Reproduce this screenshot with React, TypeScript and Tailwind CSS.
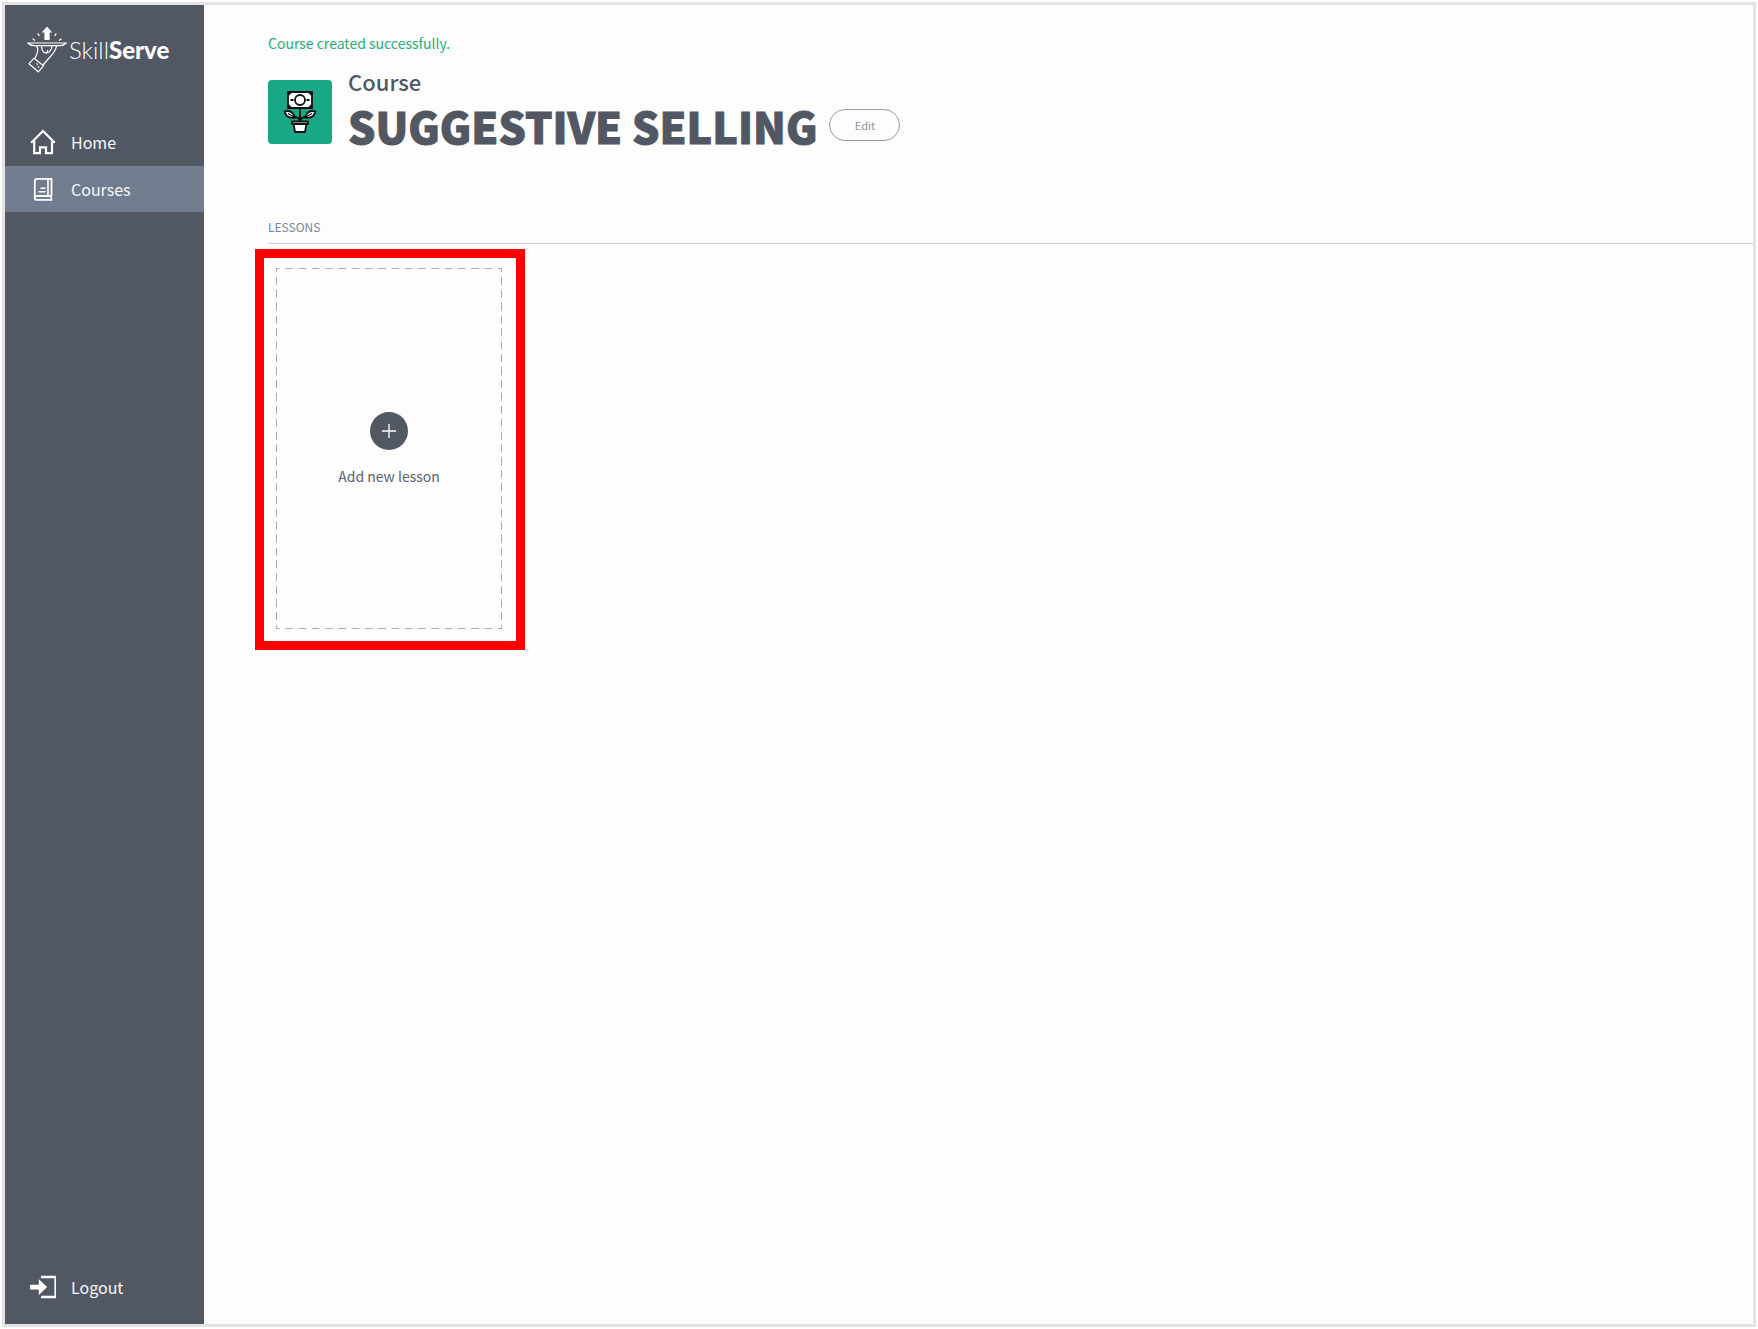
import type { ReactNode } from "react";

interface NavItemProps {
  label: string;
  icon: ReactNode;
  active?: boolean;
}

function NavItem({ label, icon, active = false }: NavItemProps) {
  return (
    <a
      href="#"
      aria-current={active ? "page" : undefined}
      className={
        active
          ? "flex h-[46px] items-center gap-[15px] bg-[#717d8f] pl-[23px] text-base leading-6 text-[#f7f8fa]"
          : "flex h-[46px] items-center gap-[15px] pl-[23px] text-base leading-6 text-[#f7f8fa]"
      }
    >
      {icon}
      {label}
    </a>
  );
}

function HomeIcon() {
  return (
    <svg viewBox="0 0 28 28" className="h-7 w-7" fill="none" stroke="#fff" strokeWidth="2.2">
      <path d="M3.200 14.800 15 3l11.800 11.800M6.200 12.500V25.200h5.800V19.300h6v5.900h6V12.500" />
    </svg>
  );
}

function CoursesIcon() {
  return (
    <svg viewBox="0 0 28 28" className="h-7 w-7" fill="none" stroke="#fff" strokeWidth="1.800">
      <path d="M23.500 21V3.800H9A2.200 2.200 0 0 0 6.800 6v17" />
      <path d="M23.500 21H8.700a1.900 1.900 0 0 0 0 3.800h15.700" />
      <path d="M20 4v17M23.300 21v4" strokeWidth="1.600" />
      <path d="M12.500 13.300h5M10.500 16.800h7" strokeWidth="1.600" />
    </svg>
  );
}

function LogoutIcon() {
  return (
    <svg viewBox="0 0 28 28" className="h-7 w-7" fill="none">
      <path d="M13 4h15M28 24H13" stroke="#fff" strokeWidth="2.400" />
      <path d="M27.200 3v22" stroke="#fff" strokeWidth="1.600" />
      <path d="M2 11.800h8.800V6.200l8.400 7.900-8.400 7.900v-5.400H2z" fill="#fff" />
    </svg>
  );
}

function Logo() {
  return (
    <a href="#" className="flex h-12 items-center" aria-label="SkillServe">
      <svg viewBox="0 0 42 48" className="h-12 w-[42px]" fill="none" stroke="#fff" strokeWidth="1.200">
        <path d="M20 0.500 25.300 6.500H22.600V14h-5.200V6.500H14.700z" fill="#fff" stroke="none" />
        <path d="m5.500 12.800 2.500 1.700M10.700 7.300l1.700 2.500M29.300 7.300l-1.700 2.500M34.500 12.800 32 14.500" />
        <path d="M.8 17h38.400c-1.700 1.900-3.500 2.600-6.200 2.600H7C4.300 19.600 2.500 18.900.8 17z" />
        <path d="M9 19.800c1.800 1.200 2 3.200 1.600 5.700-.5 2.500-1.700 4.500-2.600 7" />
        <path d="M14.500 20c.3 3 .8 6 3 6.800 1.800.6 3-.8 3.200-2.800M18.500 26.800c3.200 1 6-2.300 6.500-6.800" />
        <path d="M29.500 20c-.8 5-4 8.500-7 11.500l-6.500 7.500" />
        <path d="m7 32.200 9.500 7.600-5.200 6L2 37.600z" />
        <path d="m9.500 37.500 1.200 1.200M11 40.300l1.200 1.200" />
      </svg>
      <span className="font-['Lato',sans-serif] text-2xl leading-7 font-light text-white">
        Skill<span className="font-black">Serve</span>
      </span>
    </a>
  );
}

function CourseIcon() {
  return (
    <span className="flex h-16 w-16 items-center justify-center rounded bg-[#1aa786]">
      <svg viewBox="0 0 34 42" className="h-[42px] w-[34px]" fill="none" stroke="#111" strokeWidth="1.800" strokeLinejoin="round">
        <path d="M17 17v13M17 29.500c-1-2.500-3-3.500-6-3.500M17 29.500c1-2.500 3-3.500 6-3.500" />
        <rect x="5" y="1" width="24" height="16" fill="#fff" />
        <path d="M5 5 9 1H5zM25 1l4 4V1zM5 13l4 4H5zM25 17l4-4v4z" fill="#111" strokeWidth="1" />
        <path d="M7.500 9h3M23.500 9h3" />
        <circle cx="17" cy="9" r="5" fill="#fff" />
        <path d="M1.500 20.500c5-1.500 9 .5 10.500 6-5 1-9-.5-10.500-6z" fill="#fff" />
        <path d="M32.500 20.500c-5-1.500-9 .5-10.500 6 5 1 9-.5 10.500-6z" fill="#fff" />
        <path d="m5 22.500 6 3.500M29 22.500l-6 3.500" strokeWidth="1.200" />
        <path d="M10.500 32.500h13l-1.500 8.500H12z" fill="#fff" />
        <path d="M9 30.500h16v2.500H9z" fill="#fff" />
      </svg>
    </span>
  );
}

function AddLessonCard() {
  // The outline is painted as four tiled strips to get longer dashes than border-dashed draws.
  return (
    <button
      type="button"
      className="flex h-[361px] w-[226px] flex-col items-center justify-center gap-[14px] bg-[image:linear-gradient(90deg,#a9abb0_8px,transparent_8px),linear-gradient(90deg,#a9abb0_8px,transparent_8px),linear-gradient(#a9abb0_8px,transparent_8px),linear-gradient(#a9abb0_8px,transparent_8px)] [background-position:-4px_0,-4px_100%,0_-4px,100%_-4px] [background-repeat:round_no-repeat,round_no-repeat,no-repeat_round,no-repeat_round] [background-size:13px_1px,13px_1px,1px_13px,1px_13px] pt-[3px] text-[#5c626d]"
    >
      <span className="flex h-[38px] w-[38px] items-center justify-center rounded-full bg-[#515763]">
        <svg viewBox="0 0 14 14" className="h-[14px] w-[14px]" stroke="#fff" strokeWidth="1.300">
          <path d="M7 0v14M0 7h14" />
        </svg>
      </span>
      <span className="text-sm leading-6">Add new lesson</span>
    </button>
  );
}

export default function App() {
  return (
    <div className="flex min-h-screen bg-white p-0.5 font-['Noto_Sans_CJK_SC',sans-serif]">
      <div className="flex flex-1 border-[3px] border-[#e3e3e3] bg-[#fdfdfd]">
        <aside className="flex w-[199px] shrink-0 flex-col bg-[#515763] pt-[21px] pb-[14px]">
          <div className="pl-[22px]">
            <Logo />
          </div>
          <nav className="mt-[45px] flex flex-1 flex-col gap-px">
            <NavItem label="Home" icon={<HomeIcon />} />
            <NavItem label="Courses" icon={<CoursesIcon />} active />
            <div className="mt-auto">
              <NavItem label="Logout" icon={<LogoutIcon />} />
            </div>
          </nav>
        </aside>

        <main className="min-w-0 flex-1 pt-[26px] pl-16">
          <p role="status" className="text-sm leading-6 text-[#27ae7a]">
            Course created successfully.
          </p>

          <header className="mt-[10px] flex items-start gap-4">
            <div className="pt-[15px]">
              <CourseIcon />
            </div>
            <div>
              <p className="text-[22px] leading-8 font-medium text-[#515763]">Course</p>
              <div className="flex items-center gap-3">
                <h1 className="text-[43px] leading-[56px] font-black text-[#515763] uppercase [-webkit-text-stroke:1px_#515763]">
                  Suggestive Selling
                </h1>
                <button
                  type="button"
                  className="h-8 w-[71px] rounded-full border border-[#9a9da5] text-[11px] leading-4 text-[#8f939b]"
                >
                  Edit
                </button>
              </div>
            </div>
          </header>

          <section className="mt-16">
            <h2 className="border-b border-[#ccd2db] pb-1.5 text-xs leading-5 text-[#7a8698] uppercase">
              Lessons
            </h2>
            <div className="mt-[5px] -ml-[13px] w-[270px] border-[9px] border-[#ff0000] pt-[10px] pb-3 pl-3">
              <AddLessonCard />
            </div>
          </section>
        </main>
      </div>
    </div>
  );
}
